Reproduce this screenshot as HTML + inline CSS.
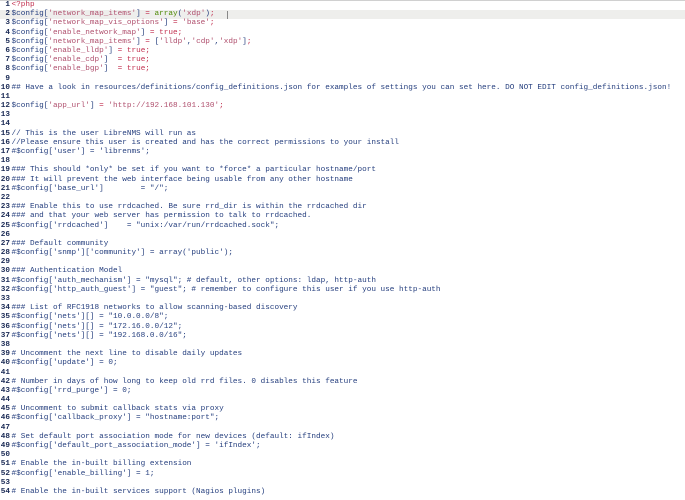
<!DOCTYPE html>
<html><head><meta charset="utf-8"><style>
html,body{margin:0;padding:0;background:#fff;width:685px;height:500px;overflow:hidden}
.top{position:absolute;left:0;top:0;width:685px;height:1px;background:#d0d0d0}
.wrap{position:absolute;left:0;top:1px;width:685px;font-family:"Liberation Mono",monospace;font-size:7.7px;line-height:9.2px;color:#27407f}
.l{height:9.2px;position:relative;white-space:pre}
.n{display:inline-block;width:10px;text-align:right;color:#1a2a55;font-weight:bold;margin-right:1.5px}
.hl{background:#eeeeec}
.s{color:#b0506e}
.k{color:#c2304f}
.g{color:#4e8a06}
.p{color:#c2304f}
.cur{position:absolute;left:227px;top:1px;width:1px;height:8px;background:#888}
</style></head><body><div class="top"></div><div class="wrap"><div class="l"><span class="n">1</span><span class="p">&lt;?php</span></div><div class="l hl"><span class="n">2</span>$config[<span class="s">'network_map_items'</span>] <span class="k">=</span> <span class="g">array</span>(<span class="s">'xdp'</span>)<span class="k">;</span><span class="cur"></span></div><div class="l"><span class="n">3</span>$config[<span class="s">'network_map_vis_options'</span>] <span class="k">=</span> <span class="s">'base'</span><span class="k">;</span></div><div class="l"><span class="n">4</span>$config[<span class="s">'enable_network_map'</span>] <span class="k">=</span> <span class="k">true;</span></div><div class="l"><span class="n">5</span>$config[<span class="s">'network_map_items'</span>] <span class="k">=</span> [<span class="s">'lldp'</span>,<span class="s">'cdp'</span>,<span class="s">'xdp'</span>]<span class="k">;</span></div><div class="l"><span class="n">6</span>$config[<span class="s">'enable_lldp'</span>] <span class="k">=</span> <span class="k">true;</span></div><div class="l"><span class="n">7</span>$config[<span class="s">'enable_cdp'</span>]  <span class="k">=</span> <span class="k">true;</span></div><div class="l"><span class="n">8</span>$config[<span class="s">'enable_bgp'</span>]  <span class="k">=</span> <span class="k">true;</span></div><div class="l"><span class="n">9</span></div><div class="l"><span class="n">10</span>## Have a look in resources/definitions/config_definitions.json for examples of settings you can set here. DO NOT EDIT config_definitions.json!</div><div class="l"><span class="n">11</span></div><div class="l"><span class="n">12</span>$config[<span class="s">'app_url'</span>] <span class="k">=</span> <span class="s">'http://192.168.101.130'</span><span class="k">;</span></div><div class="l"><span class="n">13</span></div><div class="l"><span class="n">14</span></div><div class="l"><span class="n">15</span>// This is the user LibreNMS will run as</div><div class="l"><span class="n">16</span>//Please ensure this user is created and has the correct permissions to your install</div><div class="l"><span class="n">17</span>#$config['user'] = 'librenms';</div><div class="l"><span class="n">18</span></div><div class="l"><span class="n">19</span>### This should *only* be set if you want to *force* a particular hostname/port</div><div class="l"><span class="n">20</span>### It will prevent the web interface being usable from any other hostname</div><div class="l"><span class="n">21</span>#$config['base_url']        = "/";</div><div class="l"><span class="n">22</span></div><div class="l"><span class="n">23</span>### Enable this to use rrdcached. Be sure rrd_dir is within the rrdcached dir</div><div class="l"><span class="n">24</span>### and that your web server has permission to talk to rrdcached.</div><div class="l"><span class="n">25</span>#$config['rrdcached']    = "unix:/var/run/rrdcached.sock";</div><div class="l"><span class="n">26</span></div><div class="l"><span class="n">27</span>### Default community</div><div class="l"><span class="n">28</span>#$config['snmp']['community'] = array('public');</div><div class="l"><span class="n">29</span></div><div class="l"><span class="n">30</span>### Authentication Model</div><div class="l"><span class="n">31</span>#$config['auth_mechanism'] = "mysql"; # default, other options: ldap, http-auth</div><div class="l"><span class="n">32</span>#$config['http_auth_guest'] = "guest"; # remember to configure this user if you use http-auth</div><div class="l"><span class="n">33</span></div><div class="l"><span class="n">34</span>### List of RFC1918 networks to allow scanning-based discovery</div><div class="l"><span class="n">35</span>#$config['nets'][] = "10.0.0.0/8";</div><div class="l"><span class="n">36</span>#$config['nets'][] = "172.16.0.0/12";</div><div class="l"><span class="n">37</span>#$config['nets'][] = "192.168.0.0/16";</div><div class="l"><span class="n">38</span></div><div class="l"><span class="n">39</span># Uncomment the next line to disable daily updates</div><div class="l"><span class="n">40</span>#$config['update'] = 0;</div><div class="l"><span class="n">41</span></div><div class="l"><span class="n">42</span># Number in days of how long to keep old rrd files. 0 disables this feature</div><div class="l"><span class="n">43</span>#$config['rrd_purge'] = 0;</div><div class="l"><span class="n">44</span></div><div class="l"><span class="n">45</span># Uncomment to submit callback stats via proxy</div><div class="l"><span class="n">46</span>#$config['callback_proxy'] = "hostname:port";</div><div class="l"><span class="n">47</span></div><div class="l"><span class="n">48</span># Set default port association mode for new devices (default: ifIndex)</div><div class="l"><span class="n">49</span>#$config['default_port_association_mode'] = 'ifIndex';</div><div class="l"><span class="n">50</span></div><div class="l"><span class="n">51</span># Enable the in-built billing extension</div><div class="l"><span class="n">52</span>#$config['enable_billing'] = 1;</div><div class="l"><span class="n">53</span></div><div class="l"><span class="n">54</span># Enable the in-built services support (Nagios plugins)</div></div></body></html>
